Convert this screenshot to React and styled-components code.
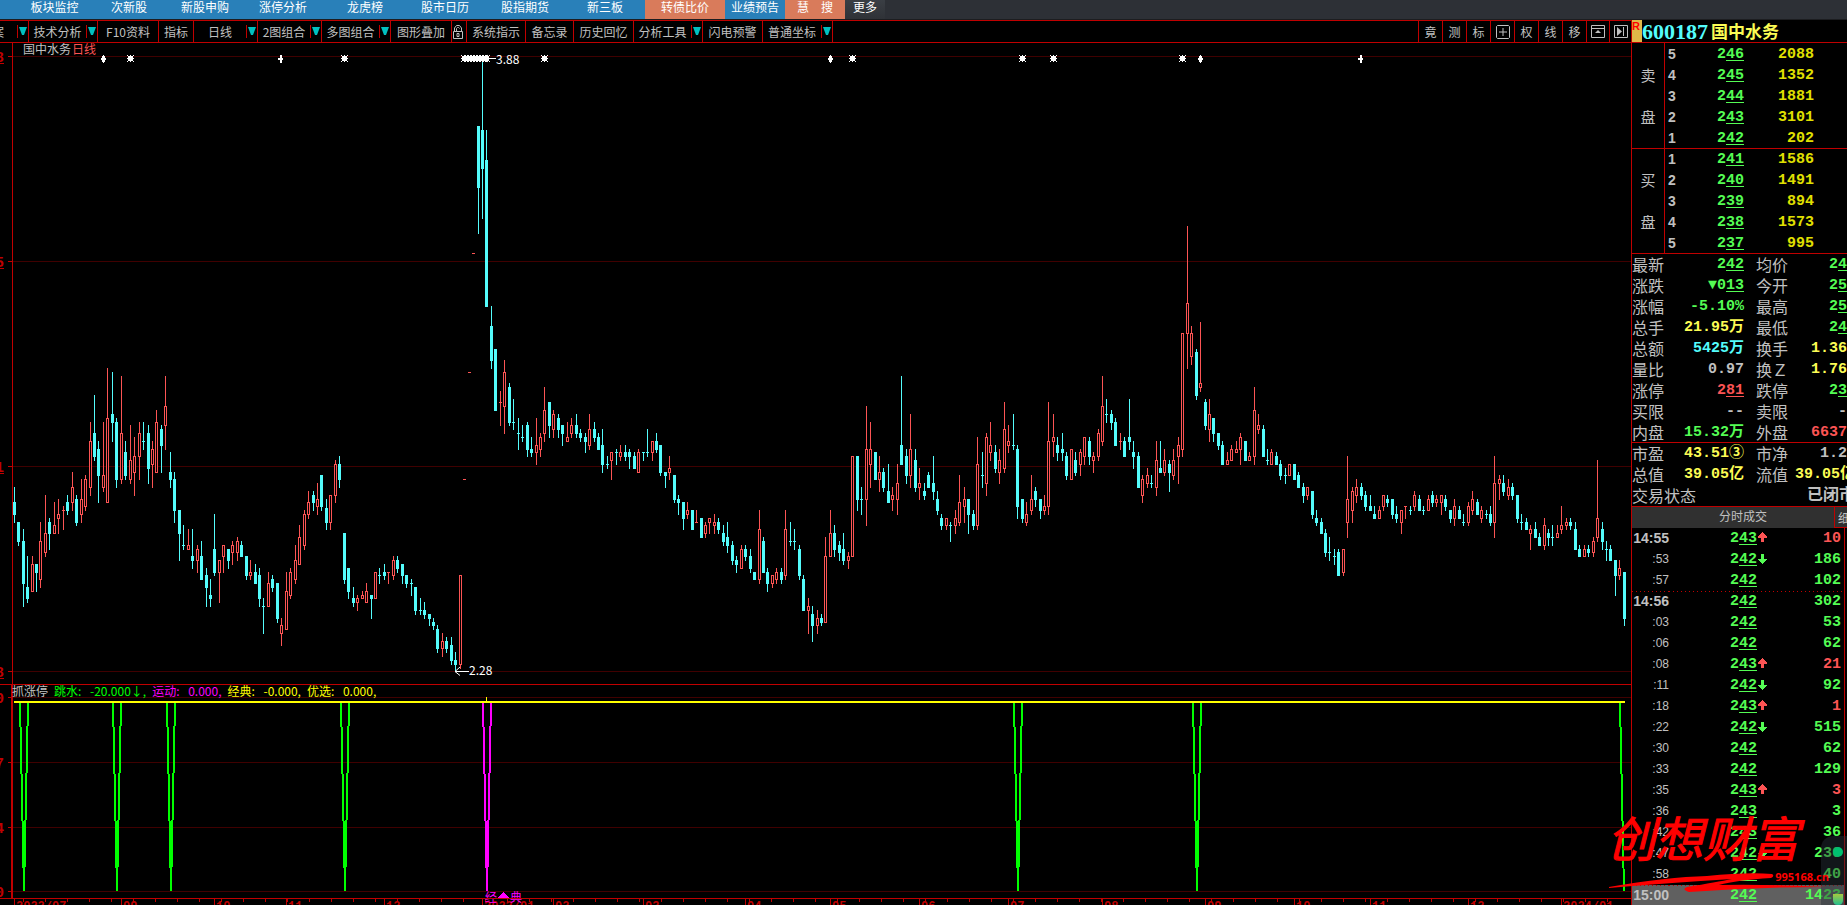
import React from 'react';
import styled, { createGlobalStyle } from 'styled-components';

const RED = '#c00000';
const DIM_RED = '#400000';
const GREY = '#c0c0c0';
const GREEN = '#54fc54';
const CYAN = '#54fcfc';
const YELLOW = '#fcfc54';
const PINK = '#fc5454';

const CJK = '"Noto Sans CJK SC", sans-serif';
const NUM = '"Liberation Mono", "Noto Sans CJK SC", monospace';

const GlobalStyle = createGlobalStyle`
  * { box-sizing: border-box; }

  body {
    margin: 0;
    background: #000;
    color: ${GREY};
    font-family: ${CJK};
    font-size: 12px;
    overflow: hidden;
  }

  button {
    font-family: inherit;
    font-size: inherit;
    color: inherit;
    background: none;
    border: none;
    padding: 0;
    white-space: nowrap;
  }
`;

const Page = styled.div`
  position: relative;
  height: 100vh;
  display: flex;
  flex-direction: column;
  overflow: hidden;
`;

const TopNav = styled.nav`
  display: flex;
  height: 20px;
  flex: none;
  background: #2d3036;
  border-bottom: 1px solid #1c1d20;
`;

const navColors = {
  blue: '#2980b9',
  orange: '#d97b5b',
  dark: 'linear-gradient(#3a3e44, #2f3237)',
};

const NavButton = styled.button`
  width: ${({ $w }) => $w}px;
  height: 19px;
  padding-bottom: 5px;
  line-height: 14px;
  background: ${({ $tone }) => navColors[$tone]};
  color: #fff;
  white-space: pre;
`;

const NavLead = styled.div`
  width: 20px;
  background: ${navColors.blue};
`;

const Body = styled.div`
  flex: 1;
  min-height: 0;
  display: grid;
  grid-template-columns: minmax(0, 1fr) 216px;
`;

const Main = styled.main`
  display: flex;
  flex-direction: column;
  min-height: 0;
`;

const Toolbar = styled.div`
  display: flex;
  justify-content: space-between;
  flex: none;
  height: 23px;
  border-top: 1px solid ${RED};
  border-bottom: 1px solid ${RED};
`;

const ToolGroup = styled.div`
  display: flex;
`;

const Tool = styled.button`
  display: flex;
  align-items: center;
  width: ${({ $w }) => $w}px;
  height: 21px;
  line-height: 20px;
  border-right: 1px solid ${RED};
`;

const ToolText = styled.span`
  flex: 1;
  text-align: center;
  min-width: 0;
  display: flex;
  justify-content: ${({ $cut }) => ($cut ? 'flex-start' : 'center')};
  margin-left: ${({ $cut }) => ($cut ? '-8px' : '0')};
`;

const ToolArrow = styled.span`
  display: flex;
  justify-content: center;
  width: 11px;
  height: 13px;
  padding-top: 2px;
  margin-bottom: 1px;
  border-left: 1px solid ${RED};
`;

const SmallTool = styled.button`
  display: flex;
  align-items: center;
  justify-content: center;
  width: ${({ $w }) => $w || 24}px;
  height: 21px;
  border-left: 1px solid ${RED};
`;

const Pane = styled.section`
  position: relative;
  flex: ${({ $share }) => $share} 1 0;
  min-height: 0;

  svg {
    display: block;
    width: 100%;
    height: 100%;
  }
`;

const PaneTitle = styled.div`
  position: absolute;
  left: 23px;
  top: 0;
  line-height: 12px;
  display: flex;
  gap: 1px;

  b {
    font-weight: normal;
    color: ${PINK};
  }
`;

const Legend = styled.div`
  position: absolute;
  left: 12px;
  top: 0;
  display: flex;
  gap: 6px;
  line-height: 13px;
`;

const LegendItem = styled.span`
  color: ${({ $color }) => $color};

  span {
    display: inline-block;
    width: 36px;
  }
`;

const Side = styled.aside`
  display: flex;
  flex-direction: column;
  min-height: 0;
  min-width: 0;
  border-left: 1px solid ${RED};
  overflow: hidden;
`;

const StockHead = styled.header`
  display: flex;
  flex: none;
  height: 23px;
  border-bottom: 1px solid ${RED};
  line-height: 24px;
`;

const RFlag = styled.span`
  width: 10px;
  background: #e0b848;
  color: #f00;
  font: bold 11px/13px "Liberation Sans", sans-serif;
`;

const Code = styled.span`
  font: bold 22px/23px "Liberation Serif", serif;
  color: ${CYAN};
`;

const StockName = styled.h1`
  margin: 0 0 0 3px;
  font-size: 17px;
  font-weight: bold;
  line-height: 22px;
  color: ${YELLOW};
`;

const BookSide = styled.div`
  display: flex;
  flex: none;
  height: 105px;
  box-shadow: ${({ $line }) => ($line ? `inset 0 1px ${RED}` : 'none')};
`;

const BookLabel = styled.div`
  display: grid;
  grid-template-rows: repeat(5, 21px);
  justify-content: center;
  width: 33px;
  border-right: 1px solid ${RED};
  font-size: 15px;
  line-height: 21px;

  span:first-child { grid-row: 2; }
  span:last-child { grid-row: 4; }
`;

const Table = styled.table`
  table-layout: fixed;
  border-collapse: collapse;
  width: ${({ $w }) => $w};
  font-family: ${NUM};
  font-size: 15px;
  font-weight: bold;
  line-height: ${({ $low }) => ($low ? 18 : 20)}px;
  white-space: nowrap;

  td, th {
    height: 21px;
    padding: 0;
  }

  td {
    padding-top: ${({ $low }) => ($low ? 3 : 0)}px;
  }
`;

const Cell = styled.td`
  color: ${({ $color }) => $color || GREY};
  text-align: right;
`;

const Level = styled.th`
  padding-left: 3px !important;
  text-align: left;
  font: bold 14px/20px "Liberation Sans", sans-serif;
`;

const Label = styled.th`
  text-align: left;
  font: normal 16px/20px ${CJK};
  padding-left: ${({ $gap }) => ($gap ? '12px' : '0')} !important;
`;

const Under = styled.span`
  text-decoration: underline;
  text-decoration-thickness: 1px;
  text-underline-offset: 2px;
`;

const Cut = styled.span`
  margin-right: -8px;
`;

const State = styled(Cut)`
  font-size: 16px;
`;

const Quotes = styled.div`
  flex: none;
  box-shadow: inset 0 1px ${RED};
`;

const TickHead = styled.div`
  display: flex;
  flex: none;
  height: 22px;
  border-top: 1px solid ${RED};
  background: #303030;
  line-height: 18px;
`;

const TickTitle = styled.h2`
  flex: 1;
  margin: 0;
  padding-left: 20px;
  font-size: 12px;
  font-weight: normal;
  text-align: center;
`;

const Detail = styled.button`
  width: 13px;
  padding-left: 3px;
  text-align: left;
  overflow: hidden;
  border-left: 1px solid ${RED};
  border-bottom: 1px solid ${RED};
`;

const Ticks = styled.div`
  flex: 1;
  min-height: 0;
  margin-right: 2px;
  border-right: 1px solid ${RED};
`;

const TickRow = styled.tr`
  background: ${({ $active }) => ($active ? '#606060' : 'none')};
  ${({ $dotted }) => $dotted && `
    td {
      background-image: repeating-linear-gradient(90deg, ${RED} 0 1px, transparent 1px 4px);
      background-size: 100% 1px;
      background-repeat: no-repeat;
    }
  `}
`;

const Time = styled.td`
  text-align: right;
  font: ${({ $full }) => ($full ? 'bold 14px' : 'normal 12px')}/19px "Liberation Sans", sans-serif;
`;

const Volume = styled(Cell)`
  padding-right: 3px !important;
`;

const ArrowIcon = styled.svg`
  display: block;
  margin: 0 auto;
`;

const Watermark = styled.div`
  position: absolute;
  right: 18px;
  bottom: 10px;
  width: 222px;
  height: 86px;
  color: #f00;
  pointer-events: none;

  p {
    margin: 0;
    font-size: 48px;
    line-height: 54px;
    font-style: italic;
    -webkit-text-stroke: 1px #f00;
    white-space: nowrap;
  }

  svg {
    position: absolute;
    left: 0;
    bottom: 0;
  }

  small {
    position: absolute;
    right: 0;
    bottom: 12px;
    font: bold 11px/12px "Open Sans", sans-serif;
  }
`;

const Floater = styled.div`
  position: absolute;
  right: 0;
  bottom: 0;
  width: 26px;
  height: 69px;
  border-radius: 12px 0 0 0;
  background: rgba(40, 48, 58, 0.45);

  svg { display: block; }
`;

const nav = [
  ['板块监控', 69, 'blue'],
  ['次新股', 80, 'blue'],
  ['新股申购', 72, 'blue'],
  ['涨停分析', 84, 'blue'],
  ['龙虎榜', 80, 'blue'],
  ['股市日历', 80, 'blue'],
  ['股指期货', 80, 'blue'],
  ['新三板', 80, 'blue'],
  ['转债比价', 80, 'orange'],
  ['业绩预告', 60, 'blue'],
  ['慧　搜', 60, 'orange'],
  ['更多', 40, 'dark'],
];

const tools = [
  { text: '案', w: 29, arrow: true, cut: true },
  { text: '技术分析', w: 69, arrow: true },
  { text: 'F10资料', w: 61 },
  { text: '指标', w: 35 },
  { text: '日线', w: 64, arrow: true },
  { text: '2图组合', w: 64, arrow: true },
  { text: '多图组合', w: 69, arrow: true },
  { text: '图形叠加', w: 61 },
  { lock: true, w: 15 },
  { text: '系统指示', w: 59 },
  { text: '备忘录', w: 48 },
  { text: '历史回忆', w: 60 },
  { text: '分析工具', w: 69, arrow: true },
  { text: '闪电预警', w: 60 },
  { text: '普通坐标', w: 70, arrow: true },
];

const sells = [
  [5, '246', 2088],
  [4, '245', 1352],
  [3, '244', 1881],
  [2, '243', 3101],
  [1, '242', 202],
];

const buys = [
  [1, '241', 1586],
  [2, '240', 1491],
  [3, '239', 894],
  [4, '238', 1573],
  [5, '237', 995],
];

// label, value, colour, underlined tail length
const quotes = [
  [['最新', '242', GREEN, 2], ['均价', '24', GREEN, 1]],
  [['涨跌', '▼013', GREEN, 2], ['今开', '25', GREEN, 1]],
  [['涨幅', '-5.10%', GREEN], ['最高', '25', GREEN, 1]],
  [['总手', '21.95万', YELLOW], ['最低', '24', GREEN, 1]],
  [['总额', '5425万', CYAN], ['换手', '1.36', YELLOW]],
  [['量比', '0.97', GREY], ['换Ｚ', '1.76', YELLOW]],
  [['涨停', '281', PINK, 2], ['跌停', '23', GREEN, 1]],
  [['买限', '--', GREY], ['卖限', '-', GREY]],
  [['内盘', '15.32万', GREEN], ['外盘', '6637', PINK]],
];

const values = [
  [['市盈', '43.51③', YELLOW], ['市净', '1.2', GREY]],
  [['总值', '39.05亿', YELLOW], ['流值', '39.05亿', YELLOW, 0, true]],
];

const ticks = [
  ['14:55', '243', 'up', '10'],
  [':53', '242', 'down', '186'],
  [':57', '242', '', '102'],
  ['14:56', '242', '', '302'],
  [':03', '242', '', '53'],
  [':06', '242', '', '62'],
  [':08', '243', 'up', '21'],
  [':11', '242', 'down', '92'],
  [':18', '243', 'up', '1'],
  [':22', '242', 'down', '515'],
  [':30', '242', '', '62'],
  [':33', '242', '', '129'],
  [':35', '243', 'up', '3'],
  [':36', '243', '', '3'],
  [':42', '243', '', '36'],
  [':47', '242', 'down', '230'],
  [':58', '242', '', '40'],
  ['15:00', '242', '', '1423'],
];

// Daily bars as "x high top bottom low", an r marks a rising day.
// Each block has its own origin and number of units per pixel.
const blocks = [
  {
    x: 0, y: 350, kx: 3, ky: 3,
    bars: `43 411 456 495 519,55 516 516 576 588,70 537 573 702 771,82 618 711 747 759,r97 618 642 726 726,
109 642 642 669 726,r121 516 573 690 714,r136 435 549 609 621,148 504 516 552 600,r163 456 525 552 552,
r175 447 492 507 552,r190 468 480 483 540,202 435 456 483 495,r217 366 411 459 483,229 435 447 519 528,
r244 387 447 495 519,r256 375 387 471 483,r271 216 273 414 438,283 135 249 321 333,295 273 297 378 459,
r310 216 375 414 426,r322 54 204 459 459,337 66 192 219 276,349 204 216 390 414,r364 78 249 390 402,
376 273 306 378 390,r391 225 330 390 402,r403 261 318 369 438,r418 216 249 321 390,430 216 273 276 300,
445 225 249 357 402,r457 273 297 345 414,r469 180 216 369 369,484 225 237 288 369,r496 78 168 228 300,
511 306 366 390 414,523 366 387 483 519,538 480 480 552 633,550 525 585 588 600,r565 537 585 600 600,
577 537 618 633 657,r592 585 597 633 669,604 573 618 690 690,619 654 675 714 771,631 687 735 747 771,
643 492 597 669 678,r658 630 630 669 759,r670 585 585 621 669,685 597 597 633 657,r697 573 585 609 645,
r712 561 573 609 633,724 573 585 621 621,739 618 618 678 690,r751 630 666 678 690,766 642 666 702 702,
778 654 675 747 771,790 744 768 771 852,r805 666 699 771 771,817 675 687 714 726,832 699 699 807 819,
r844 804 825 852 888,r859 666 723 840 840,r871 654 666 738 747,r886 585 630 690 702,r898 525 561 645 645,
r913 480 492 588 600,r925 423 456 495 507,940 423 435 459 483,r952 399 447 471 495,964 375 375 471 483,
979 447 475 519 540,r991 435 435 519 540,r1006 330 342 438 459,1018 318 342 390 414`,
  },
  {
    x: 340, y: 40, kx: 3, ky: 2.45,
    bars: `13 1208 1208 1323 1333,25 1294 1294 1352 1370,40 1340 1367 1379 1389,r52 1360 1367 1379 1399,
r67 1350 1360 1370 1370,r79 1330 1350 1379 1379,94 1360 1360 1370 1419,r106 1303 1303 1370 1370,
118 1294 1310 1313 1333,133 1284 1303 1313 1323,r145 1303 1303 1306 1333,r160 1264 1274 1313 1323,
172 1264 1274 1296 1306,187 1284 1284 1313 1333,199 1311 1311 1333 1343,214 1321 1330 1333 1362,
226 1340 1340 1399 1409,241 1367 1396 1399 1409,253 1377 1396 1409 1419,268 1406 1406 1419 1436,
280 1416 1426 1436 1445,292 1433 1443 1492 1502,r307 1453 1472 1492 1512,319 1463 1472 1492 1502,
334 1463 1482 1521 1531,346 1499 1519 1531 1547,r361 1311 1311 1531 1541,r373 1076 1076 1078 1078,
r388 813 813 815 815,r400 522 522 524 524,415 211 211 363 475,427 50 220 316 439,439 220 294 654 654,
454 652 701 786 806,466 757 757 909 909,r481 860 887 889 946,r493 784 813 899 965,508 840 850 938 946,
520 880 936 938 955,535 926 963 965 1004,547 943 973 975 985,562 936 943 1004 1022,574 973 1002 1012 1022,
r589 926 992 1012 1041,r601 963 973 1004 1022,r613 850 906 965 985,628 887 887 946 975,r640 906 916 955 975,
655 916 926 955 975,667 943 943 965 995,r682 936 973 985 985,r694 926 943 965 975,709 916 943 965 975,
721 953 963 975 985,736 963 973 985 1012,r748 916 953 995 1004,763 936 953 975 985,775 963 973 1004 1004,
787 953 992 1041 1061,802 1019 1039 1041 1051,r814 1010 1010 1031 1078,829 1002 1010 1012 1041,
r841 992 1010 1022 1031,856 992 1010 1022 1031,868 1002 1010 1022 1051,883 1010 1019 1051 1051,
r895 1002 1010 1061 1061,910 1010 1010 1012 1031,922 953 1010 1012 1022,r937 982 982 1012 1031,
949 963 982 1004 1012,961 992 992 1061 1068,976 1058 1058 1068 1098,r988 1019 1049 1061 1078,
1003 1066 1066 1127 1134,1015 1115 1125 1134 1164,1030 1132 1132 1174 1200,r1042 1132 1151 1164 1174`,
  },
  {
    x: 690, y: 350, kx: 3, ky: 3,
    bars: `7 480 480 540 540,r19 480 516 519 519,34 504 504 564 564,r46 516 525 552 564,r58 504 504 519 552,
r73 492 516 528 552,85 504 516 540 552,100 525 549 576 588,112 516 561 588 609,127 573 585 633 645,
139 618 630 645 669,r154 585 597 657 657,166 585 597 621 633,181 597 618 657 669,193 666 666 690 690,
r208 480 537 690 702,220 561 573 669 669,232 654 666 702 726,r247 675 675 702 714,r259 654 666 690 702,
274 654 666 690 702,r286 480 537 678 690,301 516 573 576 588,313 537 573 576 600,328 585 597 678 690,
340 675 687 783 783,r355 744 768 783 852,367 768 792 828 876,r382 780 804 828 852,394 792 804 819 828,
r406 561 618 819 819,r421 480 549 621 621,433 525 549 600 621,448 573 585 609 633,460 549 597 633 645,
r475 606 618 633 657,r487 318 318 621 621,502 318 318 450 483,514 411 447 450 495,r529 168 297 450 528,
r541 216 297 345 414,556 306 306 390 390,r568 318 366 390 426,580 354 366 414 426,595 342 423 459 459,
r607 411 435 450 483,r622 342 399 450 495,634 78 285 345 345,649 297 318 378 402,r661 192 297 378 414,
676 297 330 414 426,r688 354 399 414 450,703 399 423 438 450,715 366 375 414 414,730 318 399 426 450,
742 423 447 483 495,754 492 504 528 540,r769 504 504 528 540,781 516 525 528 576,r796 480 504 528 552,
r808 375 456 519 528,r823 411 447 471 519,835 447 447 495 552,850 480 492 528 540,r862 261 342 528 540,
877 306 375 378 414,r889 249 261 402 438,r901 216 285 309 333,916 285 306 357 369,r928 297 330 369 402,
r943 156 237 357 369,r955 225 273 288 309,970 192 285 288 300,982 285 297 471 507,997 447 447 507 519,
r1009 456 492 519 528,r1024 375 447 483 495,1036 411 423 450 471,1051 447 447 483 507,r1063 435 468 483 495,
r1075 156 273 471 495,r1090 192 261 276 321,1102 261 285 309 333,1117 249 297 309 333,1129 306 318 378 390,
r1144 297 297 390 390,1156 306 330 369 378,r1171 297 306 345 378`,
  },
  {
    x: 1080, y: 200, kx: 3, ky: 3,
    bars: `r13 711 711 771 795,28 711 723 771 795,r40 756 768 783 819,r55 687 699 771 783,r67 528 618 726 738,
79 597 642 645 669,94 630 642 669 690,106 654 666 738 738,r121 699 723 726 750,133 711 723 771 771,
148 597 711 726 750,160 723 756 771 807,175 756 768 864 864,r187 825 837 888 909,r202 804 825 852 864,
214 825 849 852 864,r229 723 780 864 888,241 723 804 819 819,r253 747 780 819 828,268 780 792 819 876,
r280 747 780 828 840,r295 711 735 771 852,r307 399 399 750 771,r322 78 309 402 507,r334 378 399 471 495,
349 447 456 588 600,r361 366 549 564 576,376 597 606 678 690,r388 597 642 690 726,400 654 654 702 726,
415 699 699 738 750,427 723 735 795 795,r442 756 780 795 795,r454 735 747 783 783,r469 723 747 759 759,
r481 699 711 750 795,496 723 723 783 783,r508 756 768 783 783,r523 561 630 771 795,r535 642 675 690 702,
550 675 687 771 771,562 747 780 783 795,r574 747 756 795 795,589 756 768 795 795,601 780 792 828 840,
616 804 825 828 852,r628 792 792 828 828,643 792 792 840 840,655 816 825 864 864,670 849 861 888 909,
r682 861 861 888 900,697 873 873 945 957,709 930 954 969 978,724 954 966 1002 1002,736 987 999 1059 1071,
748 1011 1056 1059 1083,763 1047 1068 1071 1095,775 1047 1056 1128 1128,r790 1047 1047 1119 1128,
r802 768 897 969 1014,r817 861 873 933 969,r829 837 861 888 909,844 849 861 888 900,856 873 885 921 933,
871 885 918 933 933,883 918 942 957 957,r898 918 930 957 957,r910 885 885 921 933,922 885 897 909 921,
937 897 897 945 957,949 918 942 957 969,r964 930 930 969 1002,r976 918 918 921 957,991 918 930 933 945,
r1003 873 885 921 933,1018 885 897 933 933,1030 918 930 933 945,r1045 885 897 933 933,1057 873 885 909 921,
r1069 885 897 909 921,r1084 885 885 909 945,1096 885 897 921 933,1111 930 930 957 969,r1123 897 918 957 978,
1138 918 930 957 957,1150 942 966 969 978,r1165 906 918 969 978`,
  },
  {
    x: 1470, y: 430, kx: 3, ky: 3,
    bars: `r7 183 207 243 255,22 207 216 255 255,r34 228 240 267 279,49 240 252 255 267,61 228 252 279 288,
r73 78 159 279 324,r88 135 147 162 210,100 135 159 186 198,r115 147 171 198 210,127 159 171 198 210,
142 195 195 267 279,154 252 276 279 300,169 264 276 300 300,r181 285 297 312 360,196 276 297 324 324,
208 309 321 348 348,r223 264 285 348 360,235 297 309 324 348,247 285 321 324 348,r262 285 309 324 324,
r274 228 285 300 312,r289 264 276 288 300,301 264 276 288 300,316 276 297 360 360,328 345 357 381 381,
r343 345 357 381 381,355 345 357 369 381,r370 321 333 369 381,r382 90 264 324 336,397 276 297 336 360,
409 333 357 360 393,421 345 357 393 393,436 390 390 438 498,r448 390 414 438 450,463 426 426 567 588`,
  },
];

const candles = blocks.flatMap((block) =>
  block.bars.split(',').map((bar) => {
    const text = bar.trim();
    const up = text[0] === 'r';
    const [x, ...ys] = text.replace('r', '').split(' ').map(Number);
    const [high, top, bottom, low] = ys.map((y) => block.y + Math.round(y / block.ky));
    return { up, x: block.x + Math.floor(x / block.kx), high, top, bottom: Math.max(bottom, top + 1), low };
  })
);

const events = [
  ['dot', 103], ['star', 130], ['plus', 280], ['star', 344],
  ['star', 464], ['star', 468], ['star', 473], ['star', 477], ['star', 482], ['star', 486],
  ['star', 544], ['dot', 830], ['star', 852], ['star', 1022], ['star', 1053], ['star', 1182],
  ['dot', 1200], ['plus', 1360],
];

const months = [
  [14, '2022/07'], [121, '09'], [214, '10'], [286, '11'], [384, '12'], [482, '2023/01'], [553, '02'],
  [643, '03'], [745, '04'], [830, '05'], [919, '06'], [1008, '07'], [1102, '08'], [1205, '09'],
  [1294, '10'], [1370, '11'], [1468, '12'], [1561, '2024/01'],
];

const signals = [
  [24, '#00ff00'], [117, '#00ff00'], [171, '#00ff00'], [345, '#00ff00'], [487, '#ff00ff'],
  [1018, '#00ff00'], [1197, '#00ff00'],
];

const weeks = Array.from({ length: 73 }, (_, i) => 23 + i * 22);

const Candle = ({ up, x, high, top, bottom, low }) => {
  const color = up ? PINK : CYAN;
  const hollow = up && bottom - top > 2;
  return (
    <g fill={color}>
      {high < top && <rect x={x} y={high} width="1" height={top - high} />}
      {low > bottom && <rect x={x} y={bottom} width="1" height={low - bottom} />}
      {hollow ? (
        <rect x={x - 0.5} y={top + 0.5} width="2" height={bottom - top - 1} fill="#000" stroke={color} />
      ) : (
        <rect x={x - 1} y={top} width="3" height={bottom - top} />
      )}
    </g>
  );
};

const Event = ({ kind, x }) => {
  if (kind === 'plus') {
    return <path d={`M${x - 2} 58h5v2h-5zM${x} 55h2v8h-2z`} fill="#fff" />;
  }
  if (kind === 'dot') {
    return <path d={`M${x} 55h1v8h-1zM${x - 1} 56h3v6h-3zM${x - 2} 58h5v2h-5z`} fill="#fff" />;
  }
  return (
    <path
      d={`M${x - 2} 56h5v5h-5zM${x - 3} 55h1v1h-1zM${x + 3} 55h1v1h-1zM${x - 3} 61h1v1h-1zM${x + 3} 61h1v1h-1zM${x} 55h1v7h-1zM${x - 3} 58h7v1h-7z`}
      fill="#fff"
    />
  );
};

const PriceChart = () => (
  <svg viewBox="0 43 1631 641" preserveAspectRatio="none" shapeRendering="crispEdges">
    {[[56, '88'], [261, '35'], [466, '81'], [671, '28']].map(([y, text]) => (
      <g key={y}>
        <rect x="13" y={y} width="1618" height="1" fill={DIM_RED} />
        <rect x="8" y={y} width="5" height="1" fill={RED} />
        <text x="4" y={y + 6} textAnchor="end" fill={RED} fontFamily="Liberation Mono" fontSize="15" fontWeight="bold">
          {text}
        </text>
        <rect x="0" y={y + 7} width="4" height="1" fill={RED} />
      </g>
    ))}
    <rect x="12" y="43" width="1" height="641" fill={RED} />
    {candles.map((candle) => <Candle key={candle.x} {...candle} />)}
    {events.map(([kind, x]) => <Event key={x} kind={kind} x={x} />)}
    <g stroke="#fff" fill="none" shapeRendering="auto">
      <path d="M484 58.500h12M488 55l-4 3.500l4 3.500" />
      <path d="M455 671.500h14M460 667l-5 4.500l5 4" />
    </g>
    <g fill="#fff" fontSize="12" fontFamily="Noto Sans CJK SC">
      <text x="496" y="64">3.88</text>
      <text x="469" y="675">2.28</text>
    </g>
  </svg>
);

const SignalChart = () => (
  <svg viewBox="0 684 1631 221" preserveAspectRatio="none" shapeRendering="crispEdges">
    {[[697, '0'], [762, '7'], [827, '4'], [891, '0']].map(([y, text]) => (
      <g key={y}>
        <rect x="13" y={y} width="1618" height="1" fill={DIM_RED} />
        <rect x="8" y={y} width="5" height="1" fill={RED} />
        <text x="4" y={y + 6} textAnchor="end" fill={RED} fontFamily="Liberation Mono" fontSize="15" fontWeight="bold">
          {text}
        </text>
      </g>
    ))}
    <rect x="0" y="684" width="1631" height="1" fill={RED} />
    <rect x="11" y="684" width="2" height="214" fill={RED} />
    <rect x="0" y="898" width="1631" height="1" fill={RED} />
    {weeks.map((x) => <rect key={x} x={x} y="899" width="1" height="3" fill={RED} />)}
    {months.map(([x, text]) => (
      <g key={x} fill={RED}>
        <rect x={x} y="899" width="1" height="6" />
        <text x={x + 2} y="910" fontFamily="Liberation Mono" fontSize="12" fontWeight="bold">{text}</text>
      </g>
    ))}
    {signals.map(([x, color]) => (
      <path key={x} d={`M${x - 4} 703L${x} 891L${x + 4} 703`} fill="none" stroke={color} strokeWidth="2" strokeLinejoin="bevel" />
    ))}
    <path d="M1620 703L1624 891" stroke="#00ff00" strokeWidth="2" />
    <rect x="14" y="701" width="1611" height="2" fill="#ffff00" />
    <rect x="486" y="697" width="1" height="4" fill="#ffff00" />
    <path d="M503 892l6 6h-12z" fill="#ff00ff" />
    <g fill="#ff00ff" fontSize="12" fontFamily="Noto Sans CJK SC">
      <text x="485" y="902">经</text>
      <text x="510" y="902">典</text>
    </g>
    <rect x="484" y="898" width="40" height="1" fill={RED} />
  </svg>
);

const Triangle = () => (
  <svg width="8" height="8" viewBox="0 0 8 8"><path d="M0 0h8l-3 8h-2z" fill="#00c0c0" /></svg>
);

const Lock = () => (
  <svg width="13" height="16" viewBox="0 0 13 16" fill="none" stroke={GREY}>
    <path d="M2.500 7V4l2-2.500h3l2 2.500v3M4.500 7V4.500l1-1h1l1 1M1.500 7.500h9v7h-9zM5 9.500h2v3H5z" />
  </svg>
);

const TickArrow = ({ down }) => (
  <ArrowIcon width="10" height="13" viewBox="0 0 10 13" shapeRendering="crispEdges">
    {down
      ? <path d="M3 1h3v5h3.500L4.500 11.500L-.5 6h3.500z" fill={GREEN} />
      : <path d="M3 10h3V5.500h3.500L4.500 0L-.5 5.500h3.500z" fill={PINK} />}
  </ArrowIcon>
);

const Price = ({ text, tail = 2 }) => (
  <>{text.slice(0, text.length - tail)}<Under>{text.slice(text.length - tail)}</Under></>
);

const Book = ({ label, rows, line }) => (
  <BookSide $line={line}>
    <BookLabel><span>{label}</span><span>盘</span></BookLabel>
    <Table $w="149px" $low>
      <colgroup><col width="20" /><col width="59" /><col width="70" /></colgroup>
      <tbody>
        {rows.map(([level, price, volume]) => (
          <tr key={level}>
            <Level>{level}</Level>
            <Cell $color={GREEN}><Price text={price} /></Cell>
            <Cell $color="#e0e000">{volume}</Cell>
          </tr>
        ))}
      </tbody>
    </Table>
  </BookSide>
);

const QuoteTable = ({ rows, children }) => (
  <Quotes>
    <Table $w="215px" $low>
      <colgroup><col width="48" /><col width="64" /><col width="44" /><col width="59" /></colgroup>
      <tbody>
        {rows.map((row) => (
          <tr key={row[0][0]}>
            {row.map(([label, value, color, tail, cut], i) => (
              <React.Fragment key={label}>
                <Label $gap={i === 1}>{label}</Label>
                <Cell $color={color}>
                  {tail ? <Price text={value} tail={tail} /> : cut ? <Cut>{value}</Cut> : value}
                </Cell>
              </React.Fragment>
            ))}
          </tr>
        ))}
        {children}
      </tbody>
    </Table>
  </Quotes>
);

const App = () => (
  <Page>
    <GlobalStyle />
    <TopNav>
      <NavLead />
      {nav.map(([text, w, tone]) => (
        <NavButton key={text} type="button" $w={w} $tone={tone}>{text}</NavButton>
      ))}
    </TopNav>
    <Body>
      <Main>
        <Toolbar>
          <ToolGroup>
            {tools.map(({ text, w, arrow, cut, lock }) => (
              <Tool key={text || 'lock'} type="button" $w={w}>
                {lock ? <Lock /> : <ToolText $cut={cut}>{text}</ToolText>}
                {arrow && <ToolArrow><Triangle /></ToolArrow>}
              </Tool>
            ))}
          </ToolGroup>
          <ToolGroup>
            {['竟', '测', '标'].map((text) => <SmallTool key={text} type="button">{text}</SmallTool>)}
            <SmallTool type="button">
              <svg width="14" height="14" fill="none" stroke={GREY}><path d="M1.500 .5h11l1 1v11l-1 1h-11l-1-1v-11zM7 3v8M3 7h8" /></svg>
            </SmallTool>
            {['权', '线', '移'].map((text) => <SmallTool key={text} type="button">{text}</SmallTool>)}
            <SmallTool type="button" $w={23}>
              <svg width="14" height="13" fill="none" stroke={GREY}><path d="M.5 .5h13v12H.5zM0 3.500h14" /><path d="M7 5l3 3H4z" fill={GREY} stroke="none" /></svg>
            </SmallTool>
            <SmallTool type="button" $w={22}>
              <svg width="14" height="13" fill="none" stroke={GREY}><path d="M.5 .5h13v12H.5zM9.500 2v9" /><path d="M3 2l5 4.500L3 11z" fill={GREY} stroke="none" /></svg>
            </SmallTool>
          </ToolGroup>
        </Toolbar>
        <Pane $share={641}>
          <PriceChart />
          <PaneTitle>国中水务<b>日线</b></PaneTitle>
        </Pane>
        <Pane $share={221}>
          <SignalChart />
          <Legend>
            抓涨停
            <LegendItem $color="#00ff00"><span>跳水:</span>-20.000↓,</LegendItem>
            <LegendItem $color="#ff00ff"><span>运动:</span>0.000,</LegendItem>
            <LegendItem $color="#ffff00"><span>经典:</span>-0.000,</LegendItem>
            <LegendItem $color="#ffff00"><span>优选:</span>0.000,</LegendItem>
          </Legend>
        </Pane>
      </Main>
      <Side>
        <StockHead>
          <RFlag>R</RFlag>
          <Code>600187</Code>
          <StockName>国中水务</StockName>
        </StockHead>
        <Book label="卖" rows={sells} />
        <Book label="买" rows={buys} line />
        <QuoteTable rows={quotes} />
        <QuoteTable rows={values}>
          <tr>
            <Label colSpan={2}>交易状态</Label>
            <Cell colSpan={2}><State>已闭市</State></Cell>
          </tr>
        </QuoteTable>
        <TickHead>
          <TickTitle>分时成交</TickTitle>
          <Detail type="button">细</Detail>
        </TickHead>
        <Ticks>
          <Table $w="100%">
            <colgroup><col width="37" /><col width="88" /><col width="12" /><col /></colgroup>
            <tbody>
              {ticks.map(([time, price, move, volume], i) => {
                const full = time.length === 5;
                return (
                  <TickRow key={time} $active={i === ticks.length - 1} $dotted={full && i > 0}>
                    <Time $full={full}>{time}</Time>
                    <Cell $color={GREEN}><Price text={price} /></Cell>
                    <td>{move && <TickArrow down={move === 'down'} />}</td>
                    <Volume $color={move === 'up' ? PINK : GREEN}>{volume}</Volume>
                  </TickRow>
                );
              })}
            </tbody>
          </Table>
        </Ticks>
      </Side>
    </Body>
    <Floater>
      <svg width="26" height="69" viewBox="0 0 26 69">
        <defs>
          <linearGradient id="leaf" x1="0" y1="0" x2="0" y2="1">
            <stop offset="0" stopColor="#a8c840" />
            <stop offset="1" stopColor="#20c090" />
          </linearGradient>
        </defs>
        <circle cx="17" cy="16" r="5" fill="#00c070" />
        <path d="M12 58h10v6q0 5-5 5t-5-5z" fill="url(#leaf)" />
      </svg>
    </Floater>
    <Watermark>
      <p>创想财富</p>
      <svg width="222" height="30" viewBox="0 0 222 30" fill="#f00">
        <path d="M2 22Q60 12 100 11Q140 7 165 9Q168 11 164 13Q130 15 112 20Q160 19 220 22Q150 22 82 27Q74 24 80 22Q110 17 125 14Q60 18 2 23z" />
      </svg>
      <small>995168.cn</small>
    </Watermark>
  </Page>
);

export default App;
